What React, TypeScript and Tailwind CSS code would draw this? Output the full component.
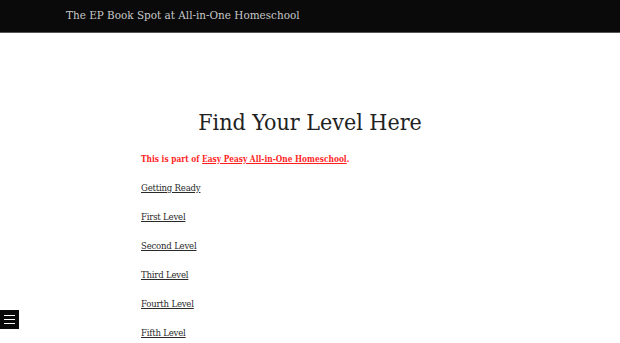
export default function App() {
  const levels = ["Getting Ready", "First Level", "Second Level", "Third Level", "Fourth Level", "Fifth Level"];
  return (
    <div
      className="relative min-h-[343px] bg-white font-stretch-condensed"
      style={{ fontFamily: '"DejaVu Serif Condensed", "DejaVu Serif", serif' }}
    >
      <header className="flex h-[33px] items-center border-b border-[#555] bg-[#0a0a0a] pl-[66px]">
        <span className="text-[11.6px] text-[#c8c8c8]">The EP Book Spot at All-in-One Homeschool</span>
      </header>
      <main className="mx-auto w-[338px] pt-[72px]">
        <h1 className="text-center text-[23px] leading-[34px] text-[#222]">Find Your Level Here</h1>
        <p className="mt-[11px] text-[8.3px] font-bold leading-[18px] text-[#ff1f1f]">
          This is part of <a href="#" className="underline">Easy Peasy All-in-One Homeschool</a>.
        </p>
        {levels.map((l) => (
          <p key={l} className="mt-[11px] text-[9.5px] leading-[18px] tracking-[-0.2px]">
            <a href="#" className="text-[#2a2a2a] underline">{l}</a>
          </p>
        ))}
      </main>
      <button className="absolute left-0 top-[310px] flex h-[19px] w-[19px] flex-col items-center justify-center gap-[3px] bg-[#0a0a0a]">
        <span className="block h-[1px] w-[11px] bg-white" />
        <span className="block h-[1px] w-[11px] bg-white" />
        <span className="block h-[1px] w-[11px] bg-white" />
      </button>
    </div>
  );
}
